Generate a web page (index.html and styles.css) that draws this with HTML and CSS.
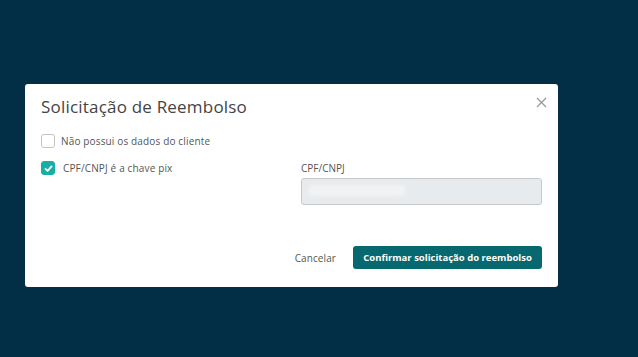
FILE: index.html
```html
<!DOCTYPE html>
<html lang="pt-br">
<head>
  <meta charset="UTF-8" />
  <meta name="viewport" content="width=device-width, initial-scale=1.0" />
  <title>Solicitação de Reembolso</title>
  <link rel="stylesheet" href="styles.css">
</head>
<body>
  <div class="backdrop">
    <div class="modal">
      <div class="modal-header">
        <h2>Solicitação de Reembolso</h2>
        <button class="close" aria-label="Fechar">
          <svg width="11" height="11" viewBox="0 0 11 11"><path d="M1 1L10 10M10 1L1 10" stroke="#9a9a9a" stroke-width="1.3" fill="none"/></svg>
        </button>
      </div>

      <div class="modal-body">
        <label class="check">
          <span class="box"></span>
          <span>Não possui os dados do cliente</span>
        </label>

        <div class="row">
          <label class="check">
            <span class="box checked">
              <svg width="9" height="9" viewBox="0 0 9 9"><path d="M1.5 4.8L3.6 6.8L7.6 2.4" stroke="#fff" stroke-width="1.8" fill="none" stroke-linecap="round" stroke-linejoin="round"/></svg>
            </span>
            <span>CPF/CNPJ é a chave pix</span>
          </label>
          <div class="field">
            <span class="field-label">CPF/CNPJ</span>
            <div class="input"><span class="blur"></span></div>
          </div>
        </div>
      </div>

      <div class="modal-footer">
        <button class="btn-link">Cancelar</button>
        <button class="btn-primary">Confirmar solicitação do reembolso</button>
      </div>
    </div>
  </div>
</body>
</html>
```

FILE: styles.css
```css
* {
  margin: 0;
  padding: 0;
  box-sizing: border-box;
  font-family: 'Open Sans', 'Liberation Sans', sans-serif;
}

body {
  background: #032f46;
  width: 638px;
  height: 357px;
  overflow: hidden;
}

.backdrop {
  padding: 84px 0 0 25px;
}

.modal {
  width: 533px;
  height: 203px;
  background: #fff;
  border-radius: 3px;
  padding: 11px 16px 18px;
  display: flex;
  flex-direction: column;
}

.modal-header {
  display: flex;
  justify-content: space-between;
  align-items: flex-start;
}

.modal-header h2 {
  font-size: 17px;
  font-weight: 400;
  line-height: 24px;
  color: #444;
  letter-spacing: 0.2px;
}

.close {
  background: none;
  border: none;
  margin-top: 2px;
  margin-right: -5px;
  width: 11px;
  height: 11px;
  display: flex;
}

.modal-body {
  margin-top: 15px;
  display: flex;
  flex-direction: column;
  gap: 13px;
}

.check {
  display: flex;
  align-items: center;
  gap: 6px;
  font-size: 10px;
  letter-spacing: 0.15px;
  color: #555;
  height: 14px;
}

.box {
  width: 14px;
  height: 14px;
  border: 1px solid #c4c4c4;
  border-radius: 3px;
  display: flex;
  align-items: center;
  justify-content: center;
}

.box.checked {
  background: #17aea7;
  border-color: #17aea7;
}

.check .box.checked + span {
  margin-left: 2px;
}

.row {
  display: grid;
  grid-template-columns: 1fr 241px;
  column-gap: 19px;
  align-items: start;
}

.field {
  display: flex;
  flex-direction: column;
  gap: 3px;
}

.field-label {
  font-size: 10px;
  line-height: 14px;
  color: #555;
}

.input {
  height: 27px;
  background: #e8ebee;
  border: 1px solid #c6c8ca;
  border-radius: 3px;
  padding: 7px 0 0 8px;
}

.blur {
  display: block;
  width: 94px;
  height: 9px;
  border-radius: 5px;
  background: #f1f2f3;
  box-shadow: 0 0 3px 2px #eff0f1;
}

.modal-footer {
  margin-top: auto;
  display: flex;
  justify-content: flex-end;
  align-items: center;
  gap: 17px;
}

.btn-link {
  background: none;
  border: none;
  font-size: 10px;
  letter-spacing: 0.1px;
  color: #555;
}

.btn-primary {
  background: #07696f;
  border: none;
  border-radius: 3px;
  color: #fff;
  font-size: 9.5px;
  font-weight: 700;
  width: 189px;
  height: 23px;
}
```
